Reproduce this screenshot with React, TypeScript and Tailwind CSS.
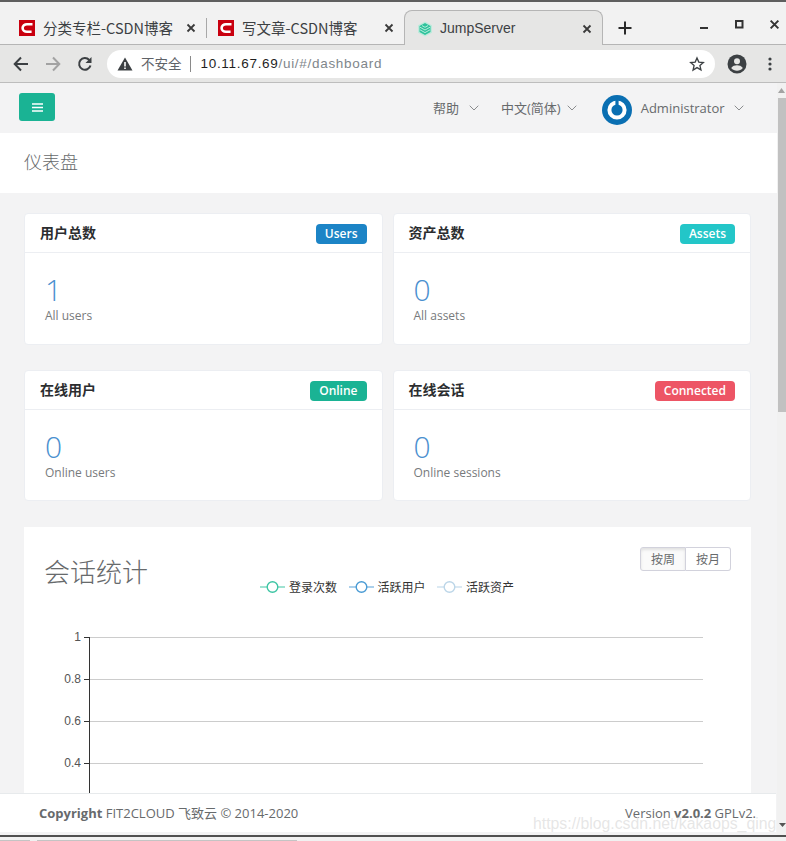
import React from "react";

const CJK = "font-['Open_Sans','Noto_Sans_CJK_SC',sans-serif]";

function Csdn() {
  return (
    <svg width="16" height="16" viewBox="0 0 16 16" className="shrink-0">
      <rect width="16" height="16" fill="#c9000f" />
      <path d="M13.5 4.2H8C5.6 4.2 3.6 5.9 3.6 8S5.6 11.8 8 11.8h4.6" fill="none" stroke="#fff" strokeWidth="2.6" />
    </svg>
  );
}

function Close({ size = 10, color = "#3a3a3a" }: { size?: number; color?: string }) {
  return (
    <svg width={size} height={size} viewBox="0 0 10 10" className="shrink-0">
      <path d="M1.5 1.5l7 7M8.5 1.5l-7 7" stroke={color} strokeWidth="1.8" />
    </svg>
  );
}

function Chevron() {
  return (
    <svg width="10" height="6" viewBox="0 0 10 6" className="shrink-0">
      <path d="M.7.7L5 5l4.3-4.3" fill="none" stroke="#8a8c8e" strokeWidth="1" />
    </svg>
  );
}

function Card({ title, badge, badgeCls, num, label, h }: { title: string; badge: string; badgeCls: string; num: string; label: string; h: string }) {
  return (
    <div className={`bg-white border border-[#eceef2] rounded-[4px] ${h}`}>
      <div className="h-[39px] border-b border-[#eceef2] flex items-center justify-between pl-[15px] pr-[15px]">
        <span className="pb-[2px] text-[14px] font-bold text-[#2b2d2f] font-['Noto_Sans_CJK_SC',sans-serif]">{title}</span>
        <span className={`mt-[2px] h-5 rounded-[4px] px-[9px] text-white text-[12px] font-semibold flex items-center font-['Open_Sans',sans-serif] ${badgeCls}`}>{badge}</span>
      </div>
      <div className="pl-5 pt-[20px] font-['Open_Sans',sans-serif]">
        <div className="text-[30px] leading-[34px] font-light text-[#4a90cf]">{num}</div>
        <div className="text-[12px] leading-[17px] text-[#777a7c]">{label}</div>
      </div>
    </div>
  );
}

function LegendItem({ color, line, label }: { color: string; line: string; label: string }) {
  return (
    <div className="flex items-center gap-[4px]">
      <svg width="25" height="14" viewBox="0 0 25 14">
        <path d="M0 7h25" stroke={line} strokeWidth="1.5" />
        <circle cx="12.5" cy="7" r="5.3" fill="#fff" stroke={color} strokeWidth="1.4" />
      </svg>
      <span className="text-[12px] text-[#333] font-['Noto_Sans_CJK_SC',sans-serif]">{label}</span>
    </div>
  );
}

function Chart() {
  const rows = [
    { y: 10, t: "1" },
    { y: 52, t: "0.8" },
    { y: 94, t: "0.6" },
    { y: 136, t: "0.4" },
  ];
  return (
    <svg width="727" height="170" viewBox="0 0 727 170" className="block">
      <path d="M65.5 10V170" stroke="#333" strokeWidth="1" />
      {rows.map((r) => (
        <g key={r.t}>
          <path d={`M60 ${r.y + 0.5}H66`} stroke="#333" strokeWidth="1" />
          <path d={`M66 ${r.y + 0.5}H679`} stroke="#ccc" strokeWidth="1" />
          <text x="57" y={r.y + 3.5} textAnchor="end" fontSize="12" fill="#555" fontFamily="Liberation Sans, sans-serif">
            {r.t}
          </text>
        </g>
      ))}
    </svg>
  );
}

export default function App() {
  return (
    <div className={`relative h-[841px] w-[786px] overflow-hidden bg-[#f3f3f4] ${CJK}`}>
      <div className="h-[2px] bg-[#5f5f5f]" />

      {/* tab strip */}
      <div className="h-[43px] bg-[#f2f2f2] border-b border-[#b5b5b5] relative flex items-end">
        <div className="flex items-center h-[33px] pl-[19px] w-[206px] shrink-0">
          <Csdn />
          <span className="ml-2 text-[14.5px] text-[#3c4043] whitespace-nowrap font-['Noto_Sans_CJK_SC',sans-serif]">分类专栏-CSDN博客</span>
          <span className="ml-auto mr-[10px]"><Close /></span>
        </div>
        <div className="w-px h-5 bg-[#a8a8a8] mb-[6px] shrink-0" />
        <div className="flex items-center h-[33px] pl-[11px] w-[197px] shrink-0">
          <Csdn />
          <span className="ml-2 text-[14.5px] text-[#3c4043] whitespace-nowrap font-['Noto_Sans_CJK_SC',sans-serif]">写文章-CSDN博客</span>
          <span className="ml-auto mr-[10px]"><Close /></span>
        </div>
        <div className="flex items-center h-[35px] pt-px -mb-px pl-[12px] w-[199px] shrink-0 bg-[#e6e6e5] border border-b-0 border-[#b5b5b5] rounded-t-[8px]">
          <svg width="16" height="16" viewBox="0 0 16 16" className="shrink-0">
            <path d="M8 .5l7 3.800v7.400l-7 3.800-7-3.800V4.300z" fill="#bfeadd" />
            <path d="M8 2l5.500 3v6L8 14l-5.500-3V5z" fill="#2fc39c" />
            <path d="M3 6.200L8 9l5-2.800M3 8.800L8 11.600l5-2.800M5 4.600L8 6.300l3-1.700" fill="none" stroke="#b6ecdc" strokeWidth="1" />
          </svg>
          <span className="ml-[7px] text-[14px] text-[#3c4043] font-['Liberation_Sans',sans-serif]">JumpServer</span>
          <span className="ml-auto mr-[10px]"><Close /></span>
        </div>
        <svg width="14" height="14" viewBox="0 0 14 14" className="ml-[15px] mb-[9px] shrink-0">
          <path d="M7 .5v13M.5 7h13" stroke="#2a2a2a" strokeWidth="2" />
        </svg>
        <div className="absolute right-[6px] top-[17px] flex items-start gap-[24px]">
          <svg width="11" height="11" viewBox="0 0 11 11"><path d="M1 9h8" stroke="#333" strokeWidth="2" /></svg>
          <svg width="11" height="11" viewBox="0 0 11 11"><rect x="2" y="2" width="6.5" height="6.5" fill="none" stroke="#333" strokeWidth="2" /></svg>
          <Close size={11} color="#333" />
        </div>
      </div>

      {/* toolbar */}
      <div className="h-[38px] bg-[#e6e6e5] border-b border-[#bdbdbd] flex items-center">
        <div className="flex items-center w-[107px] pl-[13px] shrink-0">
          <svg width="16" height="16" viewBox="0 0 16 16"><path d="M15 8H2M8 1.500L1.700 8 8 14.500" fill="none" stroke="#3c4043" strokeWidth="2" /></svg>
          <svg width="16" height="16" viewBox="0 0 16 16" className="ml-[16px]"><path d="M1 8h13M8 1.500L14.300 8 8 14.500" fill="none" stroke="#a2a2a2" strokeWidth="2" /></svg>
          <svg width="16" height="16" viewBox="0 0 16 16" className="ml-[16px]"><path d="M13.500 9.500A5.800 5.800 0 1 1 12.200 4" fill="none" stroke="#3c4043" strokeWidth="2" /><path d="M14.500 1v6h-6z" fill="#3c4043" /></svg>
        </div>
        <div className="w-[608px] h-[28px] bg-white rounded-full flex items-center pl-[10px] shrink-0">
          <svg width="16" height="14" viewBox="0 0 16 14"><path d="M8 .5L15.500 13.500H.5z" fill="#3c4043" /><path d="M7.200 5h1.600v4.600H7.200zM7.200 10.500h1.600V12H7.200z" fill="#fff" /></svg>
          <span className="ml-[8px] text-[13.5px] text-[#5f6368] font-['Noto_Sans_CJK_SC',sans-serif]">不安全</span>
          <span className="ml-[8px] w-px h-4 bg-[#8a8a8a]" />
          <span className="ml-[10px] pt-[2px] text-[13.5px] whitespace-nowrap font-['Liberation_Sans',sans-serif] tracking-[0.7px]">
            <span className="text-[#1f1f1f]">10.11.67.69</span>
            <span className="text-[#80868b]">/ui/#/dashboard</span>
          </span>
          <svg width="16" height="16" viewBox="0 0 24 24" className="ml-auto mr-[10px]"><path d="M12 3l2.700 6.200 6.800.6-5.100 4.500 1.500 6.600L12 17.400 6.100 21l1.500-6.600L2.500 9.800l6.800-.6z" fill="none" stroke="#3c4043" strokeWidth="2" /></svg>
        </div>
        <svg width="20" height="20" viewBox="0 0 20 20" className="ml-[12px]">
          <circle cx="10" cy="10" r="9.500" fill="#3c4043" />
          <circle cx="10" cy="7.300" r="3" fill="#e6e6e5" />
          <path d="M4.200 14c1.300-2 3.600-2.700 5.800-2.700S14.500 12 15.800 14c-1.400 1.800-3.500 2.800-5.800 2.800S5.600 15.800 4.200 14z" fill="#e6e6e5" />
        </svg>
        <svg width="4" height="14" viewBox="0 0 4 14" className="ml-[21px]">
          <circle cx="2" cy="2" r="1.600" fill="#3c4043" /><circle cx="2" cy="7" r="1.600" fill="#3c4043" /><circle cx="2" cy="12" r="1.600" fill="#3c4043" />
        </svg>
      </div>

      {/* page */}
      <div className="flex h-[752px] overflow-hidden">
        <div className="w-[777px] shrink-0">
          <div className="h-[50px] flex items-center pl-[19px] text-[13px] text-[#676a6c]">
            <div className="-mt-[2px] w-9 h-7 bg-[#1ab394] rounded-[3px] flex items-center justify-center">
              <svg width="11" height="9" viewBox="0 0 11 9"><path d="M0 1h11M0 4.500h11M0 8h11" stroke="#fff" strokeWidth="1.700" /></svg>
            </div>
            <div className="ml-[378px] flex items-center gap-[10px]"><span className="mt-[2px]">帮助</span><Chevron /></div>
            <div className="ml-[22px] flex items-center gap-[6px]"><span className="mt-[2px]">中文(简体)</span><Chevron /></div>
            <div className="ml-[25px] flex items-center">
              <svg width="30" height="30" viewBox="0 0 30 30" className="mt-[4px]">
                <circle cx="15" cy="15" r="15" fill="#0a6fb2" />
                <circle cx="15" cy="15" r="7.600" fill="none" stroke="#fff" strokeWidth="4" />
                <path d="M15 4.500V15" stroke="#0a6fb2" strokeWidth="3.200" />
              </svg>
              <span className="ml-[9px] mt-[2px]">Administrator</span>
              <span className="ml-[9px]"><Chevron /></span>
            </div>
          </div>

          <div className="h-[60px] bg-white flex items-center pl-6 pb-[3px] text-[18px] text-[#676a6c] font-['Noto_Sans_CJK_SC',sans-serif] font-light">
            仪表盘
          </div>

          <div className="pl-6 pr-[26px] pt-5">
            <div className="grid grid-cols-2 gap-x-[10px] gap-y-[25px]">
              <Card title="用户总数" badge="Users" badgeCls="bg-[#1c84c6]" num="1" label="All users" h="h-[132px]" />
              <Card title="资产总数" badge="Assets" badgeCls="bg-[#23c6c8]" num="0" label="All assets" h="h-[132px]" />
              <Card title="在线用户" badge="Online" badgeCls="bg-[#1ab394]" num="0" label="Online users" h="h-[131px]" />
              <Card title="在线会话" badge="Connected" badgeCls="bg-[#ed5565]" num="0" label="Online sessions" h="h-[131px]" />
            </div>

            <div className="mt-[26px] bg-white h-[300px]">
              <div className="relative h-[100px]">
                <div className="absolute left-5 top-[25px] text-[26px] leading-[38px] font-light text-[#676a6c] font-['Noto_Sans_CJK_SC',sans-serif]">会话统计</div>
                <div className="absolute left-[236px] top-[51px] flex items-center gap-[11.5px]">
                  <LegendItem color="#3ec5a4" line="#7fd8c2" label="登录次数" />
                  <LegendItem color="#4a9bd4" line="#8fc0e4" label="活跃用户" />
                  <LegendItem color="#bcd6e8" line="#cfe2ef" label="活跃资产" />
                </div>
                <div className="absolute right-5 top-5 flex text-[12px] text-[#676a6c] font-['Noto_Sans_CJK_SC',sans-serif]">
                  <div className="w-[46px] h-6 flex items-center justify-center bg-[#fafafa] border border-[#d2d2dc] rounded-l-[3px] shadow-[inset_0_2px_3px_rgba(0,0,0,0.1)]">按周</div>
                  <div className="w-[45px] h-6 flex items-center justify-center bg-white border border-l-0 border-[#d2d2dc] rounded-r-[3px]">按月</div>
                </div>
              </div>
              <Chart />
            </div>
          </div>
        </div>

        <div className="w-[9px] shrink-0 bg-[#f1f1f1] flex flex-col items-end">
          <svg width="7" height="5" viewBox="0 0 7 5" className="mt-[5px] mr-px"><path d="M3.500 0L7 5H0z" fill="#a3a3a3" /></svg>
          <div className="mt-[5px] w-[8px] h-[314px] bg-[#c1c1c1]" />
        </div>
      </div>

      {/* footer over the content */}
      <div className="absolute left-0 top-[793px] w-[776px] h-[39px] pt-[2px] bg-white border-t border-[#e7eaec] flex items-center justify-between pl-[39px] pr-[20px] text-[13px] text-[#676a6c] font-['Open_Sans','Noto_Sans_CJK_SC',sans-serif]">
        <span><b>Copyright</b> FIT2CLOUD 飞致云 © 2014-2020</span>
        <span>Version <b>v2.0.2</b> GPLv2.</span>
      </div>
      <svg width="7" height="4" viewBox="0 0 7 4" className="absolute left-[779px] top-[823px]"><path d="M0 0h7L3.500 4z" fill="#555" /></svg>

      {/* bottom edge */}
      <div className="absolute left-0 right-0 top-[835px] h-[6px] bg-[#f1f1f1] border-t-2 border-[#505050] flex items-end gap-[7px]">
        <div className="w-[30px] h-px bg-[#c4c4c4]" />
        <div className="w-[260px] h-px bg-[#c4c4c4]" />
      </div>

      {/* watermark */}
      <div className="absolute left-[533px] top-[812px] text-[15.8px] text-[#dfdfdf]/80 font-['Liberation_Sans',sans-serif] whitespace-nowrap">
        https://blog.csdn.net/kakaops_qing
      </div>
    </div>
  );
}
